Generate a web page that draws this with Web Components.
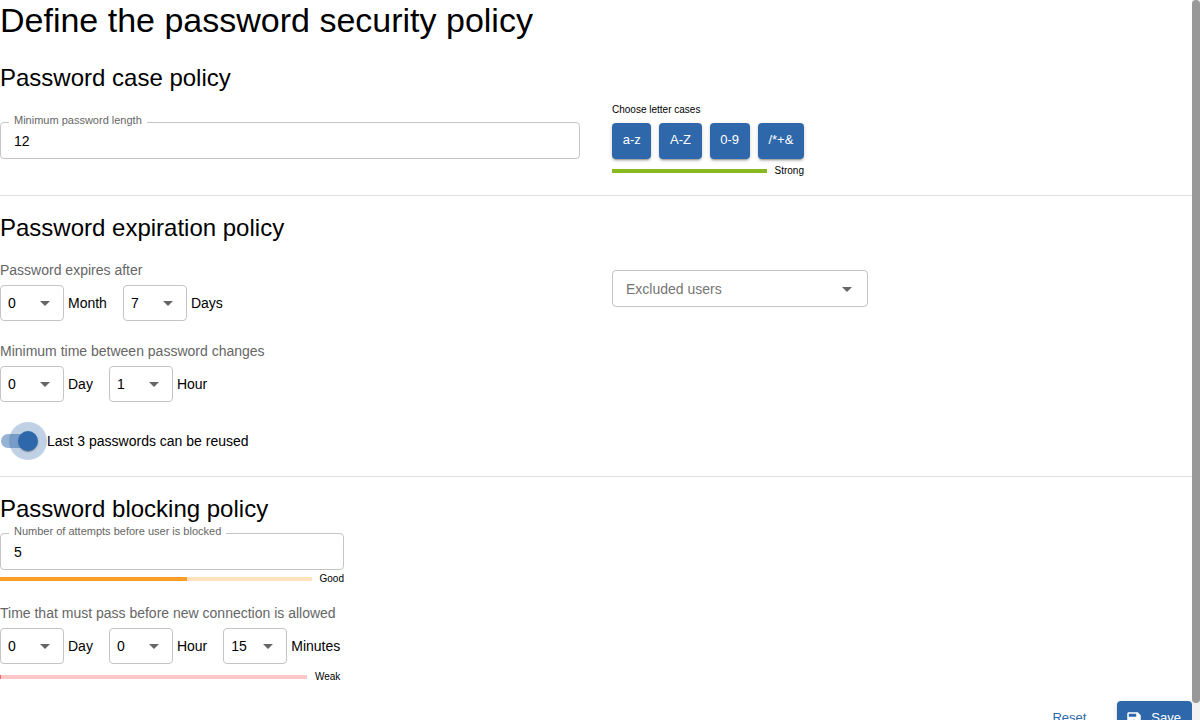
<!DOCTYPE html>
<html lang="en">
<head>
<meta charset="utf-8">
<meta name="viewport" content="width=device-width, initial-scale=1">
<title>Password security policy</title>
<style>
  :root {
    --primary: #2e68aa;
    --outline: #c4c4c4;
    --muted: #666;
    --divider: #e0e0e0;
  }
  body {
    margin: 0;
    color: #000;
    background: #fff;
    font: 14px/20px "Liberation Sans", Arial, sans-serif;
  }
</style>
</head>
<body>
<scroll-pane>
  <password-policy-page></password-policy-page>
</scroll-pane>

<script>
class BaseElement extends HTMLElement {
  connectedCallback() {
    if (this.shadowRoot) return;
    this.attachShadow({ mode: "open" }).innerHTML =
      `<style>*{box-sizing:border-box}:host{display:block}</style>` + this.render();
    this.ready();
  }
  attr(name, fallback = "") { return this.getAttribute(name) ?? fallback; }
  ready() {}
}

/* Outlined text field with its label set into the border */
class OutlinedField extends BaseElement {
  render() {
    return `<style>
      :host { position: relative; }
      input { display: block; width: 100%; height: 37px; margin: 0; padding: 1px 13px 0;
        border: 1px solid var(--outline); border-radius: 4px; background: none;
        font: inherit; color: inherit; outline: none; appearance: textfield; }
      input::-webkit-inner-spin-button { appearance: none; margin: 0; }
      input:focus { border-color: var(--primary); }
      label { position: absolute; top: -8px; left: 9px; padding: 0 5px; background: #fff;
        color: var(--muted); font-size: 11px; line-height: 12px; white-space: nowrap; }
    </style>
    <input id="field" type="number" value="${this.attr("value")}">
    <label for="field">${this.attr("label")}</label>`;
  }
}

/* Small drop-down followed by the name of its unit */
class UnitSelect extends BaseElement {
  render() {
    const value = Number(this.attr("value", "0"));
    const max = Number(this.attr("max", "23"));
    let options = "";
    for (let i = 0; i <= max; i++)
      options += `<option${i === value ? " selected" : ""}>${i}</option>`;
    return `<style>
      :host { display: flex; align-items: center; gap: 4px; }
      .box { display: grid; width: 64px; height: 36px; align-items: center; }
      .box > * { grid-area: 1 / 1; }
      select { appearance: none; width: 100%; height: 100%; margin: 0; padding: 0 24px 0 7px;
        border: 1px solid var(--outline); border-radius: 4px; background: #fff;
        font: inherit; color: inherit; }
      svg { justify-self: end; width: 24px; height: 24px; margin-right: 7px;
        fill: #666; pointer-events: none; }
    </style>
    <span class="box">
      <select id="unit">${options}</select>
      <svg viewBox="0 0 24 24" aria-hidden="true"><path d="M7 10l5 5 5-5z"/></svg>
    </span>
    <label for="unit">${this.attr("unit")}</label>`;
  }
}

/* Caption above a row of unit drop-downs */
class DurationGroup extends BaseElement {
  render() {
    return `<style>
      :host { width: fit-content; }
      .caption { color: var(--muted); margin-bottom: 5px; }
      .row { display: flex; flex-wrap: wrap; gap: 16px; }
    </style>
    <div role="group" aria-labelledby="caption">
      <div class="caption" id="caption">${this.attr("label")}</div>
      <div class="row"><slot></slot></div>
    </div>`;
  }
}

class UserPicker extends BaseElement {
  render() {
    return `<style>
      :host { display: grid; width: 256px; height: 37px; align-items: center; }
      select, svg { grid-area: 1 / 1; }
      select { appearance: none; width: 100%; height: 100%; margin: 0; padding: 0 32px 0 13px;
        border: 1px solid var(--outline); border-radius: 4px; background: #fff;
        font: inherit; color: #757575; }
      svg { justify-self: end; width: 24px; height: 24px; margin-right: 9px;
        fill: #666; pointer-events: none; }
    </style>
    <select aria-label="Excluded users"><option>Excluded users</option></select>
    <svg viewBox="0 0 24 24" aria-hidden="true"><path d="M7 10l5 5 5-5z"/></svg>`;
  }
}

/* Bar with a verdict at its right */
class StrengthMeter extends BaseElement {
  render() {
    const tones = {
      strong: ["#88b922", "#d8e7b4"],
      good: ["#ff9e27", "#ffe0bf"],
      weak: ["#f66", "#ffc7c7"]
    };
    const [fill, track] = tones[this.attr("tone")];
    const value = this.attr("value");
    return `<style>
      :host { display: flex; align-items: center; gap: 8px; height: 16px; font-size: 10px; line-height: 14px; }
      .track { flex: 1; height: 4px; background: ${track}; }
      .fill { width: ${value}%; min-width: 1px; height: 100%; background: ${fill}; }
    </style>
    <div class="track" role="meter" aria-valuemin="0" aria-valuemax="100"
      aria-valuenow="${value}" aria-labelledby="verdict"><div class="fill"></div></div>
    <span id="verdict">${this.attr("label")}</span>`;
  }
}

class ActionButton extends BaseElement {
  render() {
    return `<style>
      :host { display: flex; }
      button { display: flex; flex: 1; align-items: center; justify-content: center; gap: 8px;
        height: 36px; margin: 0; padding: 0 10px;
        border: 0; border-radius: 4px; background: var(--primary); color: #fff;
        font: inherit; font-size: 13px; line-height: 20px; cursor: pointer;
        box-shadow: 0 3px 1px -2px rgba(0,0,0,.2), 0 2px 2px rgba(0,0,0,.14), 0 1px 5px rgba(0,0,0,.12); }
      :host([variant="text"]) button { background: none; color: var(--primary); box-shadow: none; }
      :host([variant="icon"]) button { padding: 0 11px 0 8px; }
      .label { padding-bottom: 2px; }
      ::slotted(svg) { display: block; width: 18px; height: 18px; fill: currentColor; }
    </style>
    <button type="button"><slot name="icon"></slot><span class="label"><slot></slot></span></button>`;
  }
}

class LetterCases extends BaseElement {
  render() {
    return `<style>
      :host { width: 192px; }
      .caption { font-size: 10px; line-height: 15px; margin-bottom: 6px; }
      .row { display: flex; gap: 8px; margin-bottom: 4px; }
      action-button { flex: 1 0 auto; }
    </style>
    <div role="group" aria-labelledby="caption">
      <div class="caption" id="caption">Choose letter cases</div>
      <div class="row">
        <action-button>a-z</action-button>
        <action-button>A-Z</action-button>
        <action-button>0-9</action-button>
        <action-button>/*+&amp;</action-button>
      </div>
      <strength-meter tone="strong" value="100" label="Strong"></strength-meter>
    </div>`;
  }
}

class ToggleSwitch extends BaseElement {
  render() {
    return `<style>
      label { display: flex; align-items: center; width: fit-content; cursor: pointer; }
      .switch { display: grid; align-items: center; width: 47px; height: 38px; padding-left: 1px; }
      .switch > * { grid-area: 1 / 1; }
      .track { width: 34px; height: 14px; border-radius: 7px; background: #000; opacity: .38; }
      .halo { display: grid; place-items: center; justify-self: start; width: 38px; height: 38px; border-radius: 50%; }
      .thumb { width: 20px; height: 20px; border-radius: 50%; background: #fff;
        box-shadow: 0 2px 1px -1px rgba(0,0,0,.2), 0 1px 1px rgba(0,0,0,.14), 0 1px 3px rgba(0,0,0,.12); }
      input { width: 100%; height: 100%; margin: 0; opacity: 0; z-index: 1; cursor: pointer; }
      input:checked ~ .track { background: var(--primary); opacity: .5; }
      input:checked ~ .halo { justify-self: end; background: rgba(46,104,170,.3); }
      input:checked ~ .halo .thumb { background: var(--primary); }
    </style>
    <label>
      <span class="switch">
        <input type="checkbox" role="switch" checked>
        <span class="track"></span>
        <span class="halo"><span class="thumb"></span></span>
      </span>
      <span><slot></slot></span>
    </label>`;
  }
}

class PolicySection extends BaseElement {
  render() {
    return `<style>
      :host { padding: 16px 0; border-bottom: 1px solid var(--divider); }
      :host(:first-of-type) { padding-top: 0; }
      :host(:last-of-type) { border: 0; }
      h2 { margin: 0 0 8px; font-size: 24px; line-height: 32px; font-weight: 400; }
    </style>
    <section aria-labelledby="title"><h2 id="title">${this.attr("heading")}</h2><slot></slot></section>`;
  }
}

/* Window-high scrolling area with a slim bar that follows the scroll position */
class ScrollPane extends BaseElement {
  render() {
    return `<style>
      :host { display: grid; grid-template-columns: minmax(0, 1fr) 8px; height: 100vh; }
      .view { overflow-y: auto; scrollbar-width: none; }
      .bar { background: #f1f1f1; overflow: hidden; }
      .thumb { background: #999; border-radius: 4px; }
    </style>
    <div class="view"><slot></slot></div>
    <div class="bar" aria-hidden="true"><div class="thumb"></div></div>`;
  }
  ready() {
    const view = this.shadowRoot.querySelector(".view");
    const thumb = this.shadowRoot.querySelector(".thumb");
    const update = () => {
      const ratio = view.clientHeight / view.scrollHeight;
      thumb.style.height = Math.round(view.clientHeight * ratio) + "px";
      thumb.style.transform = `translateY(${Math.round(view.scrollTop * ratio)}px)`;
    };
    view.addEventListener("scroll", update);
    const observer = new ResizeObserver(update);
    observer.observe(view);
    for (const child of this.children) observer.observe(child);
  }
}

class PasswordPolicyPage extends BaseElement {
  render() {
    return `<style>
      h1 { margin: 0 0 22px; font-size: 34px; line-height: 40px; font-weight: 400; }
      .columns { display: grid; grid-template-columns: 1fr 1fr; column-gap: 32px; }
      .centered { align-items: center; }
      .stack { display: grid; gap: 20px; padding-top: 8px; justify-items: start; }
      user-picker { margin-top: 18px; }
      .attempts { display: grid; gap: 1px; width: 344px; max-width: 100%; }
      .blocking { display: grid; gap: 16px; }
      .lockout { display: grid; gap: 5px; width: fit-content; }
      footer { display: flex; justify-content: flex-end; gap: 21px; }
    </style>
    <main>
      <h1>Define the password security policy</h1>
      <policy-section heading="Password case policy">
        <div class="columns centered">
          <outlined-field label="Minimum password length" value="12"></outlined-field>
          <letter-cases></letter-cases>
        </div>
      </policy-section>
      <policy-section heading="Password expiration policy">
        <div class="columns">
          <div class="stack">
            <duration-group label="Password expires after">
              <unit-select unit="Month" value="0" max="12"></unit-select>
              <unit-select unit="Days" value="7" max="30"></unit-select>
            </duration-group>
            <duration-group label="Minimum time between password changes">
              <unit-select unit="Day" value="0" max="7"></unit-select>
              <unit-select unit="Hour" value="1"></unit-select>
            </duration-group>
            <toggle-switch>Last 3 passwords can be reused</toggle-switch>
          </div>
          <user-picker></user-picker>
        </div>
      </policy-section>
      <policy-section heading="Password blocking policy">
        <div class="blocking">
          <div class="attempts">
            <outlined-field label="Number of attempts before user is blocked" value="5"></outlined-field>
            <strength-meter tone="good" value="60" label="Good"></strength-meter>
          </div>
          <div class="lockout">
            <duration-group label="Time that must pass before new connection is allowed">
              <unit-select unit="Day" value="0" max="7"></unit-select>
              <unit-select unit="Hour" value="0"></unit-select>
              <unit-select unit="Minutes" value="15" max="59"></unit-select>
            </duration-group>
            <strength-meter tone="weak" value="0" label="Weak"></strength-meter>
          </div>
        </div>
      </policy-section>
      <footer>
        <action-button variant="text">Reset</action-button>
        <action-button variant="icon">
          <svg slot="icon" viewBox="0 0 24 24" aria-hidden="true"><path d="M17 3H5c-1.11 0-2 .9-2 2v14c0 1.1.89 2 2 2h14c1.1 0 2-.9 2-2V7l-4-4zm-5 16c-1.66 0-3-1.34-3-3s1.34-3 3-3 3 1.34 3 3-1.34 3-3 3zm3-10H5V5h10v4z"/></svg>Save
        </action-button>
      </footer>
    </main>`;
  }
}

customElements.define("outlined-field", OutlinedField);
customElements.define("unit-select", UnitSelect);
customElements.define("duration-group", DurationGroup);
customElements.define("user-picker", UserPicker);
customElements.define("strength-meter", StrengthMeter);
customElements.define("action-button", ActionButton);
customElements.define("letter-cases", LetterCases);
customElements.define("toggle-switch", ToggleSwitch);
customElements.define("policy-section", PolicySection);
customElements.define("password-policy-page", PasswordPolicyPage);
customElements.define("scroll-pane", ScrollPane);
</script>
</body>
</html>
